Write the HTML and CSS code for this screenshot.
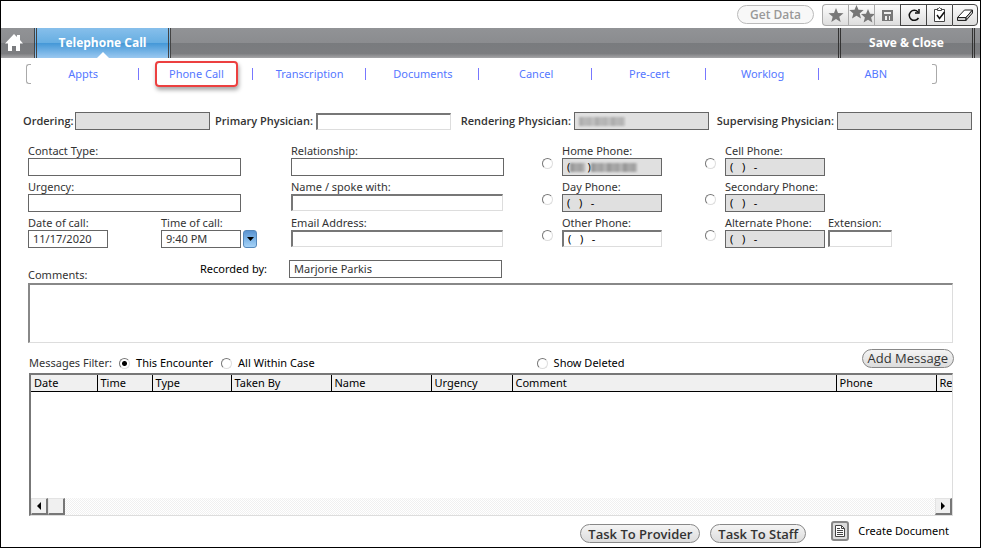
FILE: index.html
```html
<!DOCTYPE html>
<html lang="en">
    <head>
        <title>Telephone Call</title>
        <meta charset="utf-8">
        <meta name="viewport" content="width=device-width, initial-scale=1.0">
        <link rel="stylesheet" href="styles.css">
    </head>
    <body>

      <div class="window">
            <div class="toolbar">
                  <button class="pill pill-off" disabled>Get Data</button>
                  <div class="tools">
                        <button class="tool" disabled aria-label="Favorite">
                              <svg width="16" height="16" viewBox="0 0 16 16"><path fill="#777" d="M8 1l2 5 5.500.300-4.200 3.500 1.400 5.200L8 12.100 3.300 15l1.400-5.200L.5 6.300 6 6z"/></svg>
                        </button>
                        <button class="tool" disabled aria-label="Favorites">
                              <svg width="26" height="20" viewBox="0 0 26 20"><path fill="#777" d="M7.500 0l2 4.800 5.200.300-4 3.400 1.300 5.100-4.500-2.800L3 13.600l1.300-5.100-4-3.400 5.200-.3z"/><path fill="#777" d="M19 4l2 4.800 5 .300-3.900 3.400 1.300 5.100-4.400-2.800-4.400 2.800 1.300-5.100L12 9.100l5-.3z"/></svg>
                        </button>
                        <button class="tool" disabled aria-label="Save">
                              <svg width="12" height="12" viewBox="0 0 12 12"><path fill="#777" d="M0 1h11v11H0z"/><path fill="#eee" d="M2 3h7v2H2zM3 7h5v4H3z"/><path fill="#777" d="M5 7h2v4H5z"/></svg>
                        </button>
                        <button class="tool on" aria-label="Refresh">
                              <svg width="14" height="14" viewBox="0 0 14 14"><path fill="none" stroke="#111" stroke-width="1.500" d="M11 4A5 5 0 1 0 11.500 10"/><path fill="none" stroke="#111" stroke-width="1.500" d="M12 1v4H8"/></svg>
                        </button>
                        <button class="tool on" aria-label="Checklist">
                              <svg width="14" height="15" viewBox="0 0 14 15"><path fill="#fff" stroke="#444" d="M1.500 2.500h10v12h-10z"/><path fill="#fff" stroke="#444" d="M4.500 3.500v-2h1l1-1 1 1h1v2z"/><path fill="none" stroke="#111" stroke-width="1.500" d="M4 8l2.500 3.500L11.500 5"/></svg>
                        </button>
                        <button class="tool on" aria-label="Clear">
                              <svg width="18" height="14" viewBox="0 0 18 14"><path fill="#fff" stroke="#222" d="M1.500 9.500l7-7.500h8L10 9.500z"/><path fill="#ccc" stroke="#222" d="M1.500 9.500H10v3H1.500zM10 9.500L16.500 2v3L10 12.500z"/></svg>
                        </button>
                  </div>
            </div>

            <div class="mainbar">
                  <a class="home" href="#" aria-label="Home">
                        <svg width="18" height="17" viewBox="0 0 18 17"><path fill="#fff" d="M9 0l3 3V1h3v5l3 3.500h-3V17h-4v-5H7v5H3V9.500H0z"/></svg>
                  </a>
                  <a class="current" href="#">Telephone Call</a>
                  <div class="fill"></div>
                  <button class="save">Save &amp; Close</button>
                  <div class="barend"></div>
            </div>

            <ul class="subtabs">
                  <li><a href="#">Appts</a></li>
                  <li><a class="marked" href="#">Phone Call</a></li>
                  <li><a href="#">Transcription</a></li>
                  <li><a href="#">Documents</a></li>
                  <li><a href="#">Cancel</a></li>
                  <li><a href="#">Pre-cert</a></li>
                  <li><a href="#">Worklog</a></li>
                  <li><a href="#">ABN</a></li>
            </ul>

            <div class="physicians">
                  <label for="ordering">Ordering:</label>
                  <input class="box off" type="text" id="ordering" readonly>
                  <label for="primary">Primary Physician:</label>
                  <input class="box sunken" type="text" id="primary">
                  <label for="rendering">Rendering Physician:</label>
                  <div class="masked">
                        <input class="box off" type="text" id="rendering" readonly>
                        <span class="mask mask-name"></span>
                  </div>
                  <label for="supervising">Supervising Physician:</label>
                  <input class="box off" type="text" id="supervising" readonly>
            </div>

            <div class="fields">
                  <div class="col">
                        <div class="field">
                              <label for="ctype">Contact Type:</label>
                              <input class="box wide" type="text" id="ctype">
                        </div>
                        <div class="field">
                              <label for="urgency">Urgency:</label>
                              <input class="box wide" type="text" id="urgency">
                        </div>
                        <div class="when">
                              <div class="field">
                                    <label for="cdate">Date of call:</label>
                                    <input class="box short" type="text" id="cdate" value="11/17/2020">
                              </div>
                              <div class="field">
                                    <label for="ctime">Time of call:</label>
                                    <div class="pick">
                                          <input class="box short" type="text" id="ctime" value="9:40 PM">
                                          <button class="drop" aria-label="Choose time"><svg width="7" height="4" viewBox="0 0 7 4"><path d="M0 0h7L3.500 4z"/></svg></button>
                                    </div>
                              </div>
                        </div>
                  </div>

                  <div class="col">
                        <div class="field">
                              <label for="relation">Relationship:</label>
                              <input class="box wide" type="text" id="relation">
                        </div>
                        <div class="field">
                              <label for="spoke">Name / spoke with:</label>
                              <input class="box sunken wide" type="text" id="spoke">
                        </div>
                        <div class="field">
                              <label for="email">Email Address:</label>
                              <input class="box sunken wide" type="text" id="email">
                        </div>
                  </div>

                  <div class="col">
                        <div class="phone">
                              <input type="radio" name="use" aria-label="Use home phone">
                              <div class="field">
                                    <label for="home">Home Phone:</label>
                                    <div class="masked">
                                          <input class="box off num" type="text" id="home" value="(      )" readonly>
                                          <span class="mask mask-area"></span>
                                          <span class="mask mask-num"></span>
                                    </div>
                              </div>
                        </div>
                        <div class="phone">
                              <input type="radio" name="use" aria-label="Use day phone">
                              <div class="field">
                                    <label for="day">Day Phone:</label>
                                    <input class="box off num" type="text" id="day" value="(   )   -" readonly>
                              </div>
                        </div>
                        <div class="phone">
                              <input type="radio" name="use" aria-label="Use other phone">
                              <div class="field">
                                    <label for="other">Other Phone:</label>
                                    <input class="box sunken num" type="text" id="other" value="(   )   -">
                              </div>
                        </div>
                  </div>

                  <div class="col">
                        <div class="phone">
                              <input type="radio" name="use" aria-label="Use cell phone">
                              <div class="field">
                                    <label for="cell">Cell Phone:</label>
                                    <input class="box off num" type="text" id="cell" value="(   )   -" readonly>
                              </div>
                        </div>
                        <div class="phone">
                              <input type="radio" name="use" aria-label="Use secondary phone">
                              <div class="field">
                                    <label for="second">Secondary Phone:</label>
                                    <input class="box off num" type="text" id="second" value="(   )   -" readonly>
                              </div>
                        </div>
                        <div class="phone">
                              <input type="radio" name="use" aria-label="Use alternate phone">
                              <div class="field">
                                    <label for="alt">Alternate Phone:</label>
                                    <input class="box off num" type="text" id="alt" value="(   )   -" readonly>
                              </div>
                              <div class="field">
                                    <label for="ext">Extension:</label>
                                    <input class="box sunken ext" type="text" id="ext">
                              </div>
                        </div>
                  </div>
            </div>

            <div class="recorded">
                  <div class="heads">
                        <label class="lower" for="comments">Comments:</label>
                        <label class="by" for="recby">Recorded by:</label>
                  </div>
                  <input class="box wide" type="text" id="recby" value="Marjorie Parkis">
            </div>
            <textarea class="comments" id="comments"></textarea>

            <div class="filter">
                  <span class="name">Messages Filter:</span>
                  <label class="enc"><input type="radio" name="show" checked>This Encounter</label>
                  <label><input type="radio" name="show">All Within Case</label>
                  <label class="deleted"><input type="radio" name="deleted">Show Deleted</label>
                  <button class="pill">Add Message</button>
            </div>

            <div class="list">
                  <table>
                        <colgroup>
                              <col class="w66"><col class="w55"><col class="w79"><col class="w100"><col class="w100"><col class="w81"><col><col class="w100"><col class="w16">
                        </colgroup>
                        <tr>
                              <th>Date</th>
                              <th>Time</th>
                              <th>Type</th>
                              <th>Taken By</th>
                              <th>Name</th>
                              <th>Urgency</th>
                              <th>Comment</th>
                              <th>Phone</th>
                              <th>Re</th>
                        </tr>
                  </table>
                  <div class="scroll">
                        <button aria-label="Scroll left"><svg width="4" height="8" viewBox="0 0 4 8"><path d="M4 0v8L0 4z"/></svg></button>
                        <span class="thumb"></span>
                        <button class="right" aria-label="Scroll right"><svg width="4" height="8" viewBox="0 0 4 8"><path d="M0 0v8l4-4z"/></svg></button>
                  </div>
            </div>

            <div class="footer">
                  <button class="pill">Task To Provider</button>
                  <button class="pill">Task To Staff</button>
                  <button class="create">
                        <svg width="18" height="20" viewBox="0 0 18 20"><rect x="1" y="1" width="16" height="18" rx="2" fill="#ddd" stroke="#888" stroke-width="2"/><path fill="#fff" stroke="#444" d="M4.500 4.500h6l3 3v8h-9z"/><path fill="none" stroke="#444" d="M10.500 4.500v3h3M6 7.500h3M6 9.500h6M6 11.500h6M6 13.500h6"/></svg>
                        Create Document
                  </button>
            </div>
      </div>

    </body>
</html>
```
FILE: styles.css
```css
*{box-sizing: border-box;}
body{
      margin: 0;
      font-family: "Noto Sans", "Open Sans", sans-serif;
      font-size: 11px;
      line-height: 16px;
      color: #333;
      background: #fff;
}
button, input, textarea{
      font: inherit;
      color: inherit;
      margin: 0;
      padding: 0;
}
a{text-decoration: none;}
svg{display: block;flex: none;}
.window{
      min-height: 100vh;
      border: 1px solid #000;
}

/* top buttons */
.toolbar{
      display: flex;
      justify-content: flex-end;
      align-items: center;
      gap: 8px;
      height: 27px;
      padding-right: 2px;
}
.pill{
      height: 19px;
      padding: 0 7px;
      border: 1px solid #888;
      border-radius: 10px;
      background: linear-gradient(#f4f4f4, #dcdcdc);
      font-family: "Open Sans", "Noto Sans", sans-serif;
      font-size: 13px;
      line-height: 16px;
      font-weight: 500;
      white-space: nowrap;
}
.pill-off{
      padding: 0 12px;
      font-size: 12px;
      font-weight: 600;
      color: #999;
      border-color: #bbb;
      background: #f8f8f8;
}
.tools{display: flex;}
.tool{
      display: flex;
      align-items: center;
      justify-content: center;
      width: 26px;
      height: 22px;
      border: 1px solid #aaa;
      border-right-width: 0;
      background: linear-gradient(#fcfcfc, #dedede);
}
.tool:first-child{border-radius: 4px 0 0 4px;}
.tool:last-child{border-right-width: 1px;border-radius: 0 4px 4px 0;}
.tool.on{border-color: #444;}

/* grey bar */
.mainbar{
      display: flex;
      height: 30px;
      font-family: "Open Sans", "Noto Sans", sans-serif;
      font-size: 12px;
      font-weight: bold;
      color: #fff;
      background: linear-gradient(#919396, #8b8c8f 50%, #797b7e 50%, #7c7d80 85%, #a6a6a8);
}
.home{
      display: flex;
      align-items: center;
      justify-content: center;
      width: 33px;
      padding-right: 8px;
      padding-bottom: 2px;
}
.current{
      position: relative;
      width: 137px;
      border-left: 3px double #444;
      border-right: 3px double #444;
      color: #fff;
      text-align: center;
      line-height: 29px;
      background: linear-gradient(#87bfeb, #66aee2 50%, #4397d7 50%, #9ac8f0);
}
.current::after{
      content: "";
      position: absolute;
      left: 50%;
      bottom: 0;
      margin-left: -6px;
      border: 6px solid transparent;
      border-top-width: 0;
      border-bottom-color: #fff;
}
.fill{flex: 1;}
.save{
      width: 137px;
      border: 0;
      border-left: 3px double #333;
      border-right: 3px double #333;
      background: none;
      line-height: 28px;
}
.barend{width: 5px;}

/* second row of tabs */
.subtabs{
      position: relative;
      display: flex;
      align-items: center;
      margin: 5px 43px 0 25px;
      padding: 0 5px 0 0;
      height: 22px;
      list-style: none;
}
.subtabs::before, .subtabs::after{
      content: "";
      position: absolute;
      top: 1px;
      bottom: 1px;
      left: 0;
      width: 4px;
      border: 1px solid #aaa;
      border-right: 0;
      border-radius: 3px 0 0 3px;
}
.subtabs::after{
      left: auto;
      right: 0;
      border: 1px solid #aaa;
      border-left: 0;
      border-radius: 0 3px 3px 0;
}
.subtabs li{
      flex: 1;
      display: flex;
      align-items: center;
      justify-content: center;
      height: 12px;
      padding-left: 2px;
      border-right: 1px solid #77f;
}
.subtabs li:last-child{border-right-color: transparent;}
.subtabs a{color: #57f;}
.subtabs .marked{
      padding: 3px 12px;
      border: 2px solid #ec4040;
      border-radius: 4px;
      box-shadow: 1px 3px 4px rgba(0, 0, 0, 0.35);
}

/* inputs */
.box{
      display: block;
      width: 100%;
      height: 18px;
      padding: 0 4px 2px;
      border: 1px solid #666;
      background: #fff;
      border-radius: 0;
}
.off{background: #e0e0e0;}
.sunken{
      height: 17px;
      border: 1px solid #ddd;
      border-top: 2px solid #777;
      border-left: 2px solid #777;
}
.wide{width: 213px;}
.sunken.wide{width: 212px;}
.short{width: 80px;}
.num{width: 100px;color: #000;white-space: pre;}
.ext{width: 64px;}
input[type=radio]{
      appearance: none;
      flex: none;
      width: 11px;
      height: 11px;
      border: 1px solid #777;
      border-right-color: #ddd;
      border-bottom-color: #ddd;
      border-radius: 50%;
      background: #fff;
}
input[type=radio]:checked{background: radial-gradient(#000 2px, #fff 3px);}

.physicians{
      display: grid;
      grid-template-columns: 49px 1fr 100px 1fr 117px 1fr 122px 1fr;
      gap: 3px;
      align-items: center;
      margin: 27px 8px 0 22px;
      font-family: "Open Sans", "Noto Sans", sans-serif;
      font-weight: 600;
      text-align: right;
      white-space: nowrap;
}
.masked{position: relative;}
.mask{
      position: absolute;
      top: 5px;
      height: 9px;
      background: repeating-linear-gradient(90deg, #999 0 4px, #a8a8a8 4px 9px, #a0a0a0 9px 12px, #b2b2b2 12px 16px);
      filter: blur(1px);
}
.mask-name{left: 5px;width: 46px;opacity: 0.7;}
.mask-area{left: 8px;width: 15px;}
.mask-num{left: 29px;width: 46px;}

.fields{
      display: grid;
      grid-template-columns: 263fr 251fr 163fr 248fr;
      margin: 12px 27px 0 27px;
}
.col{
      display: flex;
      flex-direction: column;
      gap: 2px;
}
.field label{
      display: block;
      height: 16px;
      line-height: 18px;
      white-space: nowrap;
}
.when{display: grid;grid-template-columns: 133px auto;}
.pick{display: flex;gap: 2px;}
.drop{
      display: flex;
      align-items: center;
      justify-content: center;
      width: 14px;
      height: 18px;
      border: 1px solid #5588bb;
      border-radius: 3px;
      background: linear-gradient(#5a93d0, #7db4e6 50%, #a5d2f7);
}
.col > .field, .phone{height: 34px;}
.phone{display: flex;gap: 3px;}
.phone input[type=radio]{margin: 16px 6px 0 0;}

.recorded{
      display: grid;
      grid-template-columns: 261fr 664fr;
      margin: 12px 27px 0 27px;
}
.heads{
      display: flex;
      justify-content: space-between;
      padding-right: 22px;
}
.heads .lower{padding-top: 7px;}
.by{color: #000;padding-top: 1px;}
.comments{
      display: block;
      width: calc(100% - 54px);
      height: 60px;
      margin: 0 27px;
      border: 1px solid #ddd;
      border-top: 2px solid #888;
      border-left: 2px solid #888;
      resize: none;
}

.filter{
      display: flex;
      align-items: center;
      height: 30px;
      margin: 0 26px 0 28px;
      color: #000;
}
.filter label{
      display: flex;
      align-items: center;
      gap: 6px;
      padding-top: 10px;
}
.filter .name{color: #333;padding: 10px 7px 0 0;}
.filter .enc{margin-right: 8px;}
.filter .deleted{margin-left: 24%;}
.filter .pill{margin-left: auto;padding: 0 5px;color: #333;}

/* messages */
.list{
      display: flex;
      flex-direction: column;
      height: 143px;
      margin: 0 27px 0 28px;
      border: 1px solid #ddd;
      border-top: 2px solid #777;
      border-left: 2px solid #777;
      color: #000;
}
table{
      width: 100%;
      table-layout: fixed;
      border-collapse: collapse;
}
th{
      height: 16px;
      padding: 0 3px;
      border-right: 1px solid #000;
      border-bottom: 1px solid #000;
      background: #f0f0f0;
      font-weight: normal;
      text-align: left;
      overflow: hidden;
      white-space: nowrap;
}
th:last-child{border-right: 0;padding-right: 0;}
.w16{width: 16px;}
.w55{width: 55px;}
.w66{width: 66px;}
.w79{width: 79px;}
.w81{width: 81px;}
.w100{width: 100px;}
.scroll{
      display: flex;
      margin-top: auto;
      height: 17px;
      background: repeating-conic-gradient(#f0f0f0 0 25%, #fff 0 50%) 0 0 / 2px 2px;
}
.scroll button, .thumb{
      display: flex;
      align-items: center;
      justify-content: center;
      width: 17px;
      height: 17px;
      border: 1px solid #e3e3e3;
      border-right: 2px solid #777;
      border-bottom: 2px solid #777;
      background: #f0f0f0;
}
.scroll .right{margin-left: auto;}

.footer{
      display: flex;
      align-items: center;
      justify-content: flex-end;
      gap: 10px;
      padding: 2px 31px 2px 0;
}
.footer .pill{margin-top: 6px;font-weight: 600;}
.create{
      display: flex;
      align-items: center;
      gap: 9px;
      margin-left: 15px;
      border: 0;
      background: none;
      color: #000;
}
```
